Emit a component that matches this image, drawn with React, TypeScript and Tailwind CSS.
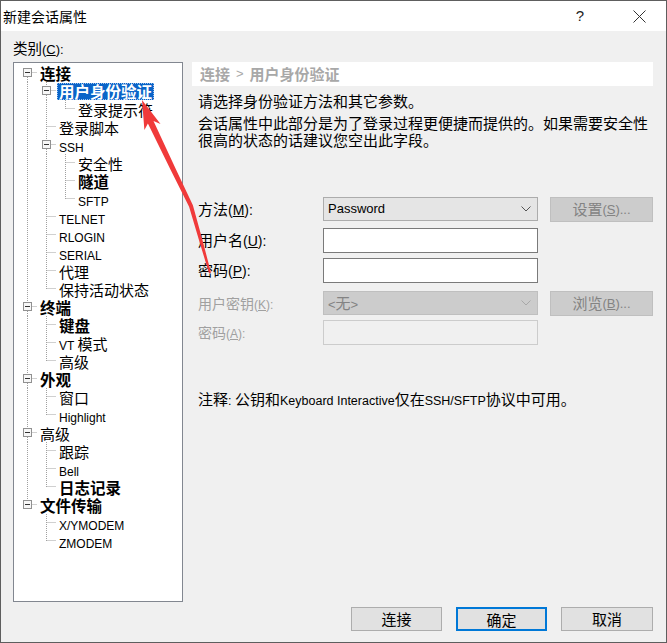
import React from "react";

const cjk = "font-['Noto_Sans_CJK_SC',sans-serif]";
const lat = "font-['Liberation_Sans','Noto_Sans_CJK_SC',sans-serif]";

type N = { t: string; b?: boolean; sel?: boolean; c?: N[] };

const tree: N[] = [
  {
    t: "连接",
    b: true,
    c: [
      { t: "用户身份验证", b: true, sel: true, c: [{ t: "登录提示符" }] },
      { t: "登录脚本" },
      { t: "SSH", c: [{ t: "安全性" }, { t: "隧道", b: true }, { t: "SFTP" }] },
      { t: "TELNET" },
      { t: "RLOGIN" },
      { t: "SERIAL" },
      { t: "代理" },
      { t: "保持活动状态" },
    ],
  },
  { t: "终端", b: true, c: [{ t: "键盘", b: true }, { t: "VT 模式" }, { t: "高级" }] },
  { t: "外观", b: true, c: [{ t: "窗口" }, { t: "Highlight" }] },
  { t: "高级", c: [{ t: "跟踪" }, { t: "Bell" }, { t: "日志记录", b: true }] },
  { t: "文件传输", b: true, c: [{ t: "X/YMODEM" }, { t: "ZMODEM" }] },
];

type Row = { n: N; level: number; anc: boolean[]; last: boolean; first: boolean };

function flatten(nodes: N[], level: number, anc: boolean[], out: Row[]) {
  nodes.forEach((n, i) => {
    const last = i === nodes.length - 1;
    out.push({ n, level, anc, last, first: level === 0 && i === 0 });
    if (n.c) flatten(n.c, level + 1, [...anc, !last], out);
  });
  return out;
}

// splits ascii runs off so latin text gets its own smaller face
function Mixed({ text, latCls }: { text: string; latCls: string }) {
  const parts = text.split(/([\x00-\x7F]+)/).filter((p) => p !== "");
  return (
    <>
      {parts.map((p, i) =>
        /^[\x00-\x7F]+$/.test(p) ? (
          <span key={i} className={`${lat} ${latCls}`}>
            {p}
          </span>
        ) : (
          <span key={i}>{p}</span>
        )
      )}
    </>
  );
}

function TreeRow({ r }: { r: Row }) {
  const L = r.level;
  const w = 19 * (L + 1);
  const cx = 19 * L + 9.5;
  const kids = !!r.n.c;
  return (
    <div className="flex h-[18px] items-center">
      <svg width={w} height={18} className="shrink-0">
        <g stroke="#a0a0a0" strokeWidth={1} strokeDasharray="1 1">
          {r.anc.map((a, d) =>
            a ? <line key={d} x1={19 * d + 9.5} y1={0} x2={19 * d + 9.5} y2={18} /> : null
          )}
          {!r.first && <line x1={cx} y1={0} x2={cx} y2={kids ? 4 : 9} />}
          {!r.last && <line x1={cx} y1={kids ? 13 : 8} x2={cx} y2={18} />}
          <line x1={kids ? cx + 5 : cx + 1} y1={8.5} x2={w} y2={8.5} />
        </g>
        {kids && (
          <>
            <rect x={19 * L + 5.5} y={4.5} width={8} height={8} fill="#f7f7f7" stroke="#919191" />
            <line x1={19 * L + 7} y1={8.5} x2={19 * L + 12} y2={8.5} stroke="#333" />
          </>
        )}
      </svg>
      <span
        className={`ml-[1px] px-[2px] h-[17px] leading-[17px] whitespace-nowrap ${
          r.n.b ? "font-bold text-[15.5px]" : "text-[15px]"
        } ${
          r.n.sel
            ? "bg-[#0a64c8] text-white outline-1 outline-dotted outline-[#9cc3f0] -outline-offset-1"
            : "text-black"
        }`}
      >
        <Mixed text={r.n.t} latCls={r.n.b ? "text-[12.5px]" : "text-[12px]"} />
      </span>
    </div>
  );
}

function Chevron({ color }: { color: string }) {
  return (
    <svg width="10" height="6" viewBox="0 0 10 6">
      <path d="M0.5 0.5 L5 5 L9.5 0.5" fill="none" stroke={color} strokeWidth="1" />
    </svg>
  );
}

function Label({ cjkText, k, disabled }: { cjkText: string; k: string; disabled?: boolean }) {
  return (
    <div
      className={`w-[131px] shrink-0 pl-[6px] whitespace-nowrap ${
        disabled ? "text-[#a0a0a0] text-[14px]" : "text-black text-[15px]"
      }`}
    >
      {cjkText}
      <span className={`${lat} ${disabled ? "text-[12px]" : "text-[14px]"}`}>
        (<u>{k}</u>):
      </span>
    </div>
  );
}

export default function App() {
  const rows = flatten(tree, 0, [], []);
  return (
    <div className={`relative w-[667px] h-[643px] overflow-hidden border border-[#5e5e5e] bg-[#f0f0f0] ${cjk}`}>
      {/* title bar */}
      <div className="flex h-[30px] items-center bg-white">
        <span className="pl-[2px] text-[14px] text-black">新建会话属性</span>
        <div className="flex-1" />
        <span className={`${lat} w-[20px] text-center text-[15px] text-[#222]`}>?</span>
        <div className="w-[43px]" />
        <svg width="13" height="13" viewBox="0 0 13 13">
          <path d="M0.5 0.5 L12.5 12.5 M12.5 0.5 L0.5 12.5" stroke="#333" strokeWidth="1" />
        </svg>
        <div className="w-[20px]" />
      </div>

      <div className="pl-[12px] pr-[13px] pt-[7px]">
        <div className="h-[20px] leading-[20px] text-[14.5px] text-black">
          类别<span className={`${lat} text-[13px]`}>(<u>C</u>):</span>
        </div>

        <div className="mt-[4px] flex">
          {/* category tree */}
          <div className="w-[170px] h-[540px] shrink-0 border border-[#828790] bg-white pl-[4px] pt-[1px]">
            {rows.map((r, i) => (
              <TreeRow key={i} r={r} />
            ))}
          </div>

          {/* right panel */}
          <div className="ml-[9px] w-[463px]">
            <div className="flex h-[24px] items-center whitespace-nowrap bg-white pl-[8px] text-[15px] font-bold text-[#a8a8a8]">
              <span>连接</span>
              <span className={`${lat} mx-[6px] text-[13px] font-normal`}>&gt;</span>
              <span>用户身份验证</span>
            </div>
            <div className="mt-[6px] pl-[6px] text-[15px] leading-[17px] text-black whitespace-nowrap">
              请选择身份验证方法和其它参数。
            </div>
            <div className="mt-[5px] pl-[6px] text-[15px] leading-[17px] text-black whitespace-nowrap">
              会话属性中此部分是为了登录过程更便捷而提供的。如果需要安全性
              <br />
              很高的状态的话建议您空出此字段。
            </div>

            {/* form */}
            <div className="mt-[49px]">
              <div className="flex h-[25px] items-center">
                <Label cjkText="方法" k="M" />
                <div className="flex h-[24px] w-[215px] items-center justify-between self-start border border-[#acacac] bg-[#e5e5e5] pl-[4px] pr-[6px]">
                  <span className={`${lat} text-[13px] text-black`}>Password</span>
                  <Chevron color="#555" />
                </div>
                <div className="ml-[12px] flex h-[25px] w-[103px] items-center justify-center border border-[#bfbfbf] bg-[#cccccc] text-[15px] text-[#838383]">
                  设置<span className={`${lat} text-[13px]`}>(<u>S</u>)...</span>
                </div>
              </div>

              <div className="mt-[6px] flex h-[25px] items-center">
                <Label cjkText="用户名" k="U" />
                <div className="h-[25px] w-[215px] border border-[#7a7a7a] bg-white" />
              </div>

              <div className="mt-[5px] flex h-[25px] items-center">
                <Label cjkText="密码" k="P" />
                <div className="h-[25px] w-[215px] border border-[#7a7a7a] bg-white" />
              </div>

              <div className="mt-[8px] flex h-[25px] items-center">
                <Label cjkText="用户密钥" k="K" disabled />
                <div className="flex h-[24px] w-[215px] items-center justify-between self-start border border-[#bfbfbf] bg-[#cccccc] pl-[4px] pr-[6px] text-[15px] text-[#838383]">
                  <span>
                    <span className={`${lat} text-[13px]`}>&lt;</span>无<span className={`${lat} text-[13px]`}>&gt;</span>
                  </span>
                  <Chevron color="#a8a8a8" />
                </div>
                <div className="ml-[12px] flex h-[25px] w-[103px] items-center justify-center border border-[#bfbfbf] bg-[#cccccc] text-[15px] text-[#838383]">
                  浏览<span className={`${lat} text-[13px]`}>(<u>B</u>)...</span>
                </div>
              </div>

              <div className="mt-[4px] flex h-[25px] items-center">
                <Label cjkText="密码" k="A" disabled />
                <div className="h-[25px] w-[215px] border border-[#cccccc] bg-[#f0f0f0]" />
              </div>
            </div>

            <div className="mt-[45px] pl-[6px] text-[15px] leading-[17px] text-black whitespace-nowrap">
              <Mixed text="注释: 公钥和Keyboard Interactive仅在SSH/SFTP协议中可用。" latCls="text-[12.5px]" />
            </div>
          </div>
        </div>

        {/* dialog buttons */}
        <div className="mt-[5px] flex justify-end gap-[14px]">
          <button className="h-[24px] w-[91px] border border-[#adadad] bg-[#e1e1e1] text-[15px] text-black">
            连接
          </button>
          <button className="h-[24px] w-[91px] border-2 border-[#0078d7] bg-[#e1e1e1] text-[15px] text-black">
            确定
          </button>
          <button className="h-[24px] w-[92px] border border-[#adadad] bg-[#e1e1e1] text-[15px] text-black">
            取消
          </button>
        </div>
      </div>

      {/* red annotation arrow */}
      <svg className="pointer-events-none absolute left-0 top-0" width="667" height="643">
        <polygon
          points="141,99 159.5,123 152.5,120.1 174.3,166.9 191.9,204.3 201.6,239.6 210,271.7 208,272.3 198.4,240.4 188.1,205.7 169.7,169.1 146.9,122.5 143.4,129"
          fill="#f03a3a"
        />
      </svg>
    </div>
  );
}
